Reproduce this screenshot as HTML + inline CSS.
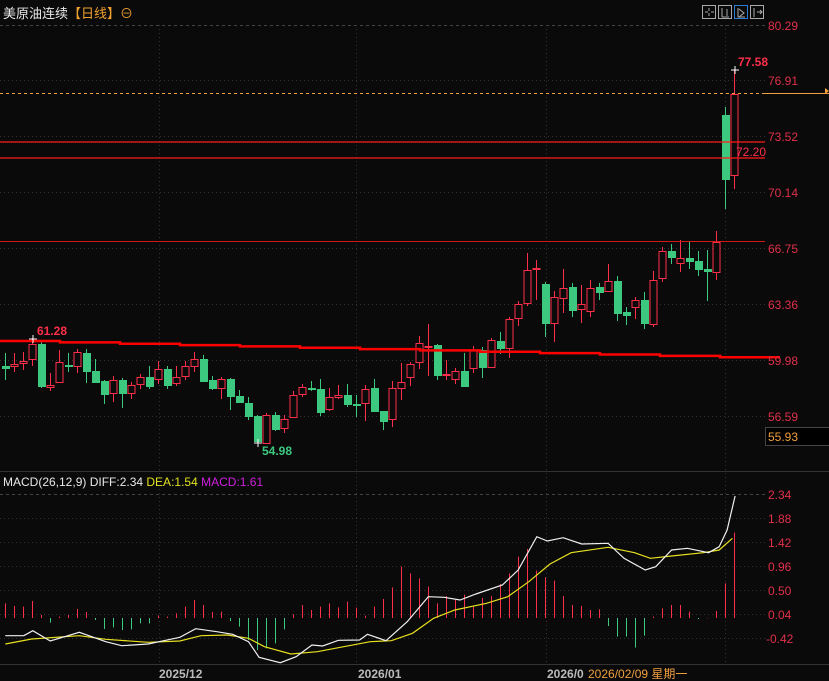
<!DOCTYPE html><html><head><meta charset="utf-8"><style>
body{margin:0;background:#0a0a0a;width:829px;height:681px;overflow:hidden;font-family:"Liberation Sans","Noto Sans CJK SC",sans-serif}
svg{display:block}
</style></head><body>
<svg id="s" width="829" height="681" xmlns="http://www.w3.org/2000/svg" font-family="Liberation Sans, Noto Sans CJK SC, sans-serif">
<rect width="829" height="681" fill="#0a0a0a"/>
<text x="3" y="18" font-size="13" fill="#e8e8e8">美原油连续<tspan fill="#f0a030">【日线】⊖</tspan></text>
<g fill="none" stroke="#aaa" stroke-width="1">
<rect x="702.5" y="5.5" width="13" height="13"/><rect x="718.5" y="5.5" width="13" height="13"/><rect x="734.5" y="5.5" width="13" height="13" stroke="#2a7fd0"/><rect x="750.5" y="5.5" width="13" height="13"/>
<path d="M709 8v3M709 13v3M705 12h3M711 12h3M722 8v9M722 17h7M727 9v7M738 8v9h7M739 9l5 4-5 4M754 8v9M757 12h5M760 10l2 2-2 2"/>
</g>
<g id="g"></g>
</svg>
<script>
const g=document.getElementById('g');let h='';
const R='#ff2f4a',G='#3cc87f';
// grid
[80,136,192,248,304,360,416].forEach(y=>h+=`<line x1="0" x2="765" y1="${y}.5" y2="${y}.5" stroke="#333" stroke-dasharray="1 3"/>`);
h+=`<line x1="0" x2="765" y1="25.5" y2="25.5" stroke="#444" stroke-dasharray="3 3"/>`;
[518,542,566,590,614,638].forEach(y=>h+=`<line x1="0" x2="765" y1="${y}.5" y2="${y}.5" stroke="#333" stroke-dasharray="1 3"/>`);
h+=`<line x1="0" x2="765" y1="494.5" y2="494.5" stroke="#444" stroke-dasharray="3 3"/>`;
[159,356,546,725].forEach(x=>h+=`<line x1="${x}.5" x2="${x}.5" y1="25" y2="664" stroke="#333" stroke-dasharray="1 3"/>`);
h+=`<line x1="0" x2="829" y1="471.5" y2="471.5" stroke="#333"/><line x1="0" x2="829" y1="664.5" y2="664.5" stroke="#333"/>`;
// candles: bodyTop,bodyBot,wickTop,wickBot,color(1=red)
const C=[[366,368,353,380,0],[364,366,353,372,1],[361,363,352,370,1],[344,359,338,366,1],[344,386,342,388,0],[385,387,373,391,1],[362,382,350,382,1],[365,366,353,372,0],[352,366,349,373,1],[353,371,349,383,0],[371,382,359,383,0],[381,394,380,404,0],[380,393,376,402,1],[380,393,378,408,0],[385,393,382,399,1],[377,384,374,389,1],[377,386,366,389,0],[369,379,361,384,1],[369,385,366,389,0],[377,383,366,386,1],[366,376,361,380,1],[359,366,352,372,1],[359,381,355,382,0],[380,388,376,390,0],[379,388,377,399,1],[379,396,378,410,0],[396,402,390,402,0],[403,416,397,420,0],[416,441,415,442,0],[415,443,413,443,1],[415,429,412,431,0],[419,428,415,433,1],[395,417,391,417,1],[387,394,384,397,1],[388,389,381,391,0],[389,412,379,416,0],[397,409,388,411,1],[395,397,385,399,1],[395,404,384,407,0],[404,405,395,417,0],[389,403,385,421,1],[388,411,379,412,0],[411,421,411,430,0],[388,419,381,427,1],[382,388,363,400,1],[364,377,362,386,1],[343,362,336,369,1],[346,347,324,376,1],[345,375,344,380,0],[374,375,360,380,1],[371,379,368,384,1],[371,386,353,386,0],[350,368,346,373,1],[350,367,347,378,0],[340,367,338,367,1],[341,348,332,354,0],[319,348,317,358,1],[304,318,301,326,1],[270,303,253,306,1],[268,269,260,300,1],[284,323,282,337,0],[297,323,291,342,1],[288,298,269,313,1],[287,310,283,317,0],[304,309,285,323,1],[288,311,280,317,1],[287,292,283,300,0],[281,291,264,292,1],[281,313,276,321,0],[312,315,307,325,0],[300,307,297,319,1],[300,323,292,329,0],[280,324,271,327,1],[251,278,247,282,1],[251,257,244,264,0],[258,263,240,272,1],[258,261,242,269,0],[261,269,251,276,0],[269,271,250,301,0],[242,272,231,280,1],[115,179,107,209,0],[94,175,70,189,1]];
C.forEach((c,i)=>{const x=5+9*i;const col=c[4]?R:G;
h+=`<line x1="${x}.5" x2="${x}.5" y1="${c[2]}" y2="${c[3]}" stroke="${col}"/>`;
const bh=Math.max(1,c[1]-c[0]);
if(c[4])h+=`<rect x="${x-3}" y="${c[0]+.5}" width="7" height="${bh}" fill="#0a0a0a" stroke="${col}"/>`;
else h+=`<rect x="${x-3}" y="${c[0]}" width="8" height="${bh+1}" fill="${col}"/>`;});
// MA line stepped
let ma='M0 341';for(let k=0;k<13;k++){const x=k*60;const y=341+k*1.35;ma+=` L${x} ${y.toFixed(1)} L${x+60} ${y.toFixed(1)}`;}
h+=`<path d="${ma}" stroke="#ff0000" stroke-width="2.5" fill="none"/>`;
h+=`<line x1="0" x2="765" y1="142" y2="142" stroke="#ff1a1a" stroke-width="1.3"/><line x1="0" x2="765" y1="158" y2="158" stroke="#ff1a1a" stroke-width="1.3"/>`;
h+=`<line x1="0" x2="765" y1="241.5" y2="241.5" stroke="#d01818"/>`;
h+=`<line x1="0" x2="762" y1="93.5" y2="93.5" stroke="#f0a040" stroke-dasharray="3 3"/><line x1="762" x2="829" y1="93.5" y2="93.5" stroke="#f0a040"/><path d="M825 88l4 3-4 3z" fill="#f0a040"/>`;
h+=`<text x="736" y="156" font-size="12" fill="${R}">72.20</text>`;
h+=`<text x="738" y="66" font-size="12" font-weight="bold" fill="${R}">77.58</text><path d="M731 70h8M735 66v8" stroke="#fff"/>`;
h+=`<text x="37" y="335" font-size="12" font-weight="bold" fill="${R}">61.28</text><path d="M29 339h8M33 335v8" stroke="#fff"/>`;
h+=`<text x="262" y="455" font-size="12" font-weight="bold" fill="${G}">54.98</text><path d="M254 443h8M258 439v8" stroke="#fff"/>`;
[['80.29',25],['76.91',80],['73.52',136],['70.14',192],['66.75',248],['63.36',304],['59.98',360],['56.59',416]].forEach(a=>h+=`<text x="768" y="${a[1]+5}" font-size="12" fill="#e0304a">${a[0]}</text>`);
h+=`<rect x="765.5" y="427.5" width="70" height="18" fill="#000" stroke="#444"/><text x="768" y="441" font-size="12" fill="#f0a040">55.93</text>`;
[['2.34',494],['1.88',518],['1.42',542],['0.96',566],['0.50',590],['0.04',614],['-0.42',638]].forEach(a=>h+=`<text x="${a[0][0]=='-'?766:768}" y="${a[1]+5}" font-size="12" fill="#e0304a">${a[0]}</text>`);
h+=`<text x="3" y="486" font-size="12" fill="#e8e8e8">MACD(26,12,9) DIFF:2.34 <tspan fill="#e0e020">DEA:1.54</tspan> <tspan fill="#d020e0">MACD:1.61</tspan></text>`;
// histogram
const H=[400,408,410,393,435,-458,440,435,417,426,-450,-477,-472,-480,-478,-460,-460,436,440,430,410,390,405,426,425,-453,-470,-510,-540,-535,-520,-478,433,405,420,410,400,412,395,413,437,410,387,352,290,310,325,350,400,378,390,374,410,384,378,342,310,260,237,302,322,332,378,405,408,420,418,-468,-500,-500,-533,-497,440,415,405,405,425,-447,445,423,340,188];
H.forEach((v,i)=>{const x=5+9*i;const t=470+Math.abs(v)/3;const b=618;const col=v>0?R:G;
h+=`<line x1="${x}.5" x2="${x}.5" y1="${v>0?t:b}" y2="${v>0?b:t}" stroke="${col}"/>`;});
const cv=p=>p.map(q=>`${(q[0]/1.891).toFixed(1)},${(470+q[1]/3).toFixed(1)}`).join(' ');
const W=[[10,497],[45,497],[62,482],[95,513],[150,487],[200,515],[230,527],[280,522],[310,512],[340,502],[370,476],[410,485],[440,493],[470,515],[490,562],[530,578],[560,560],[590,525],[610,528],[640,511],[680,510],[695,493],[730,512],[770,455],[810,380],[840,382],[870,390],[900,372],[950,345],[980,300],[1015,200],[1035,213],[1065,203],[1100,222],[1150,220],[1180,265],[1220,300],[1240,290],[1270,240],[1300,235],[1340,248],[1360,230],[1375,180],[1390,78]];
const Y=[[10,522],[60,507],[150,497],[200,508],[280,517],[340,513],[380,497],[430,495],[470,505],[500,530],[550,552],[600,545],[650,530],[700,515],[740,512],[780,490],[820,445],[860,420],[920,400],[960,380],[1000,335],[1040,282],[1080,248],[1150,232],[1200,248],[1230,265],[1270,258],[1330,248],[1360,240],[1385,205]];
h+=`<polyline points="${cv(Y)}" fill="none" stroke="#e8e020" stroke-width="1.2"/><polyline points="${cv(W)}" fill="none" stroke="#f0f0f0" stroke-width="1.2"/>`;
h+=`<text x="159" y="678" font-size="12" font-weight="bold" fill="#bbb">2025/12</text><text x="358" y="678" font-size="12" font-weight="bold" fill="#bbb">2026/01</text><text x="547" y="678" font-size="12" font-weight="bold" fill="#bbb">2026/0</text><text x="588" y="678" font-size="12" fill="#f0a040">2026/02/09 星期一</text>`;
g.innerHTML=h;
</script>
</body></html>
